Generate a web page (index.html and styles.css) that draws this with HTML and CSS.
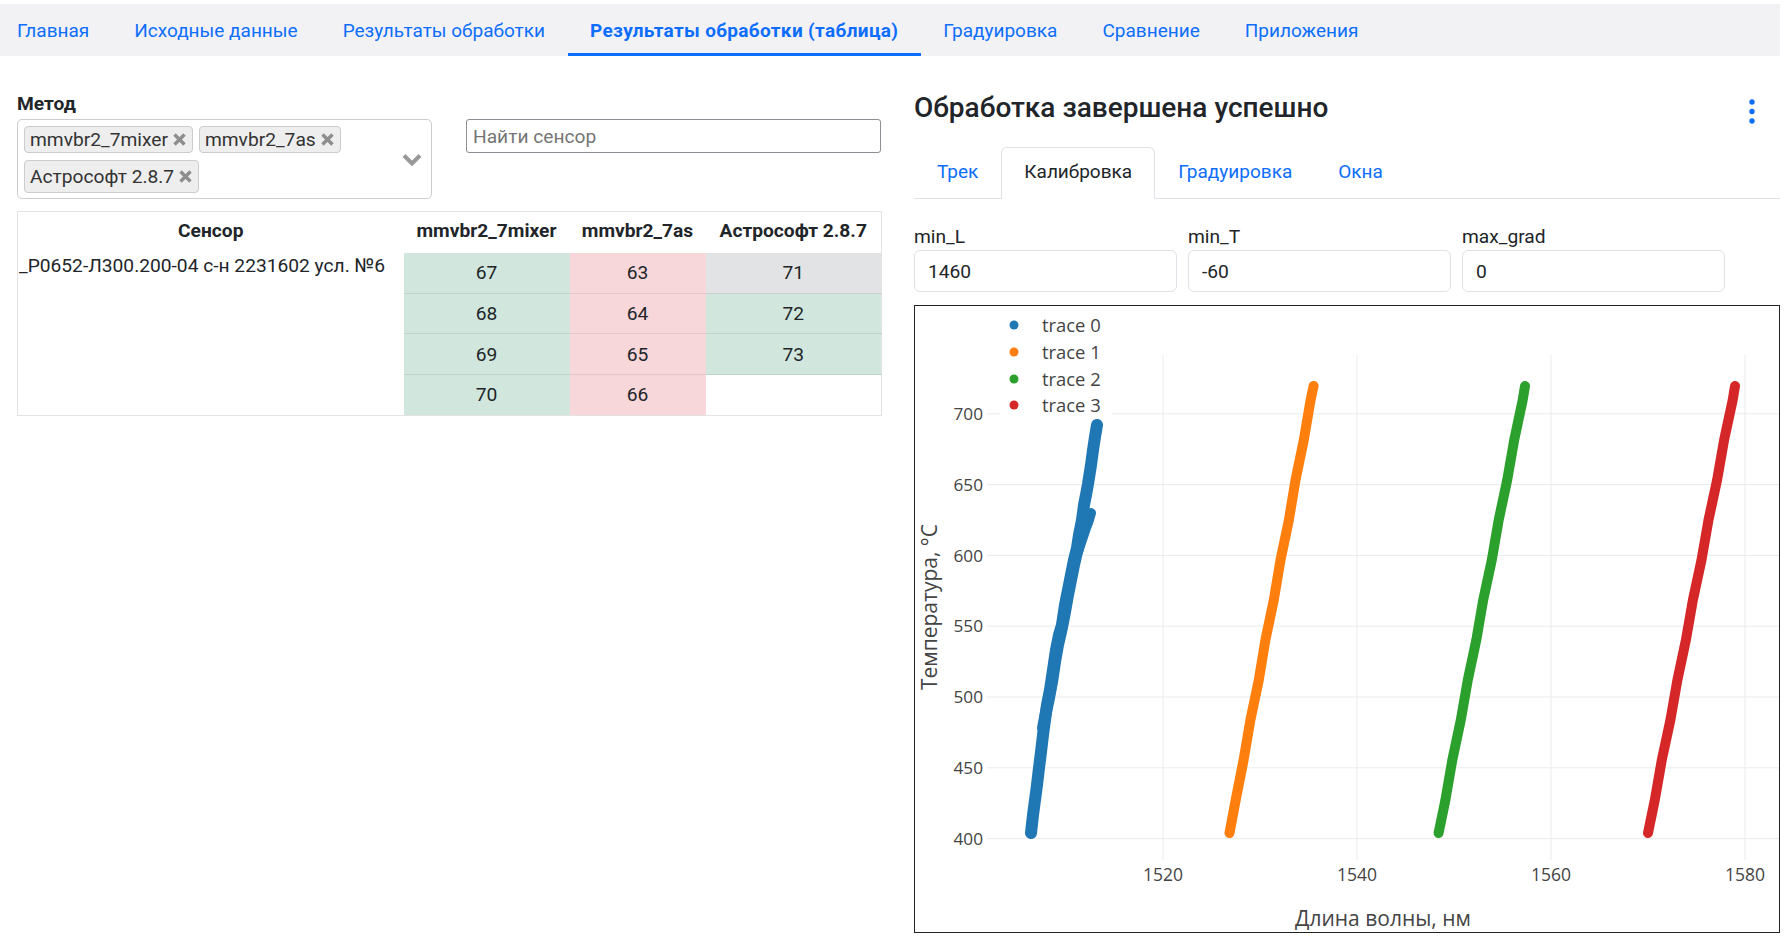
FILE: index.html
```html
<!DOCTYPE html>
<html lang="ru">
<head>
<meta charset="utf-8">
<title>Результаты обработки (таблица)</title>
<link rel="stylesheet" href="styles.css">
</head>
<body>
<nav class="topnav">
  <a class="nav-link">Главная</a>
  <a class="nav-link">Исходные данные</a>
  <a class="nav-link">Результаты обработки</a>
  <a class="nav-link active">Результаты обработки (таблица)</a>
  <a class="nav-link">Градуировка</a>
  <a class="nav-link">Сравнение</a>
  <a class="nav-link">Приложения</a>
</nav>

<main class="layout">
  <section class="left">
    <div class="filters">
      <div class="field">
        <label class="field-label">Метод</label>
        <div class="multiselect">
          <div class="chips">
            <span class="chip">mmvbr2_7mixer <svg class="chip-x" viewBox="0 0 15 15"><path d="M2.5 2.5L12.5 12.5M12.5 2.5L2.5 12.5"/></svg></span>
            <span class="chip">mmvbr2_7as <svg class="chip-x" viewBox="0 0 15 15"><path d="M2.5 2.5L12.5 12.5M12.5 2.5L2.5 12.5"/></svg></span>
            <span class="chip">Астрософт 2.8.7 <svg class="chip-x" viewBox="0 0 15 15"><path d="M2.5 2.5L12.5 12.5M12.5 2.5L2.5 12.5"/></svg></span>
            <span class="ms-input"></span>
          </div>
          <svg class="chevron" viewBox="0 0 20 13"><path d="M2 2.5L10 10.5L18 2.5"/></svg>
        </div>
      </div>
      <div class="field search-field">
        <input class="search" type="text" placeholder="Найти сенсор">
      </div>
    </div>

    <table class="results">
      <colgroup>
        <col class="c-sensor"><col class="c-mixer"><col class="c-as"><col class="c-astro">
      </colgroup>
      <thead>
        <tr><th>Сенсор</th><th>mmvbr2_7mixer</th><th>mmvbr2_7as</th><th>Астрософт 2.8.7</th></tr>
      </thead>
      <tbody>
        <tr><td rowspan="4" class="sensor">_P0652-Л300.200-04 с-н 2231602 усл. №6</td><td class="ok">67</td><td class="bad">63</td><td class="neutral">71</td></tr>
        <tr><td class="ok">68</td><td class="bad">64</td><td class="ok">72</td></tr>
        <tr><td class="ok">69</td><td class="bad">65</td><td class="ok">73</td></tr>
        <tr><td class="ok last">70</td><td class="bad last">66</td><td class="empty"></td></tr>
      </tbody>
    </table>
  </section>

  <section class="right">
    <header class="panel-head">
      <h4 class="panel-title">Обработка завершена успешно</h4>
      <button class="kebab" aria-label="menu"><svg viewBox="0 0 10 30"><circle cx="5" cy="5" r="2.7"/><circle cx="5" cy="14.5" r="2.7"/><circle cx="5" cy="24" r="2.7"/></svg></button>
    </header>

    <ul class="subtabs">
      <li class="subtab">Трек</li>
      <li class="subtab active">Калибровка</li>
      <li class="subtab">Градуировка</li>
      <li class="subtab">Окна</li>
    </ul>

    <div class="params">
      <div class="param"><label class="param-label">min_L</label><input class="param-input" value="1460"></div>
      <div class="param"><label class="param-label">min_T</label><input class="param-input" value="-60"></div>
      <div class="param"><label class="param-label">max_grad</label><input class="param-input" value="0"></div>
    </div>

    <div class="chart">
      <svg class="plot" width="864" height="626" viewBox="915 306 864 626">
        <g class="grid">
          <line x1="1163" y1="355" x2="1163" y2="860"/>
          <line x1="1357" y1="355" x2="1357" y2="860"/>
          <line x1="1551" y1="355" x2="1551" y2="860"/>
          <line x1="1745" y1="355" x2="1745" y2="860"/>
          <line x1="987" y1="838.6" x2="1779" y2="838.6"/>
          <line x1="987" y1="767.8" x2="1779" y2="767.8"/>
          <line x1="987" y1="697" x2="1779" y2="697"/>
          <line x1="987" y1="626.2" x2="1779" y2="626.2"/>
          <line x1="987" y1="555.4" x2="1779" y2="555.4"/>
          <line x1="987" y1="484.6" x2="1779" y2="484.6"/>
          <line x1="987" y1="413.8" x2="1779" y2="413.8"/>
        </g>
        <g class="yticks">
          <text x="983" y="844.8">400</text>
          <text x="983" y="774">450</text>
          <text x="983" y="703.2">500</text>
          <text x="983" y="632.4">550</text>
          <text x="983" y="561.6">600</text>
          <text x="983" y="490.8">650</text>
          <text x="983" y="420">700</text>
        </g>
        <g class="xticks">
          <text x="1163" y="881">1520</text>
          <text x="1357" y="881">1540</text>
          <text x="1551" y="881">1560</text>
          <text x="1745" y="881">1580</text>
        </g>
        <text class="axis-title" x="1383" y="926">Длина волны, нм</text>
        <text class="axis-title" x="930" y="607" dy="0.35em" transform="rotate(-90 930 607)">Температура, °C</text>

        <g class="traces">
          <polyline class="t0" points="1031,833 1033,815 1035,800 1037,785 1039,768 1041,752 1043,735 1045,720 1047,705 1050,690 1053,670 1056,650 1059,635 1062,625 1065,605 1068,590 1071,575 1074,560 1077,548 1079,535 1082,520 1084,505 1086,495 1088,484 1091,465 1093,450 1095,437 1097,425"/>
          <polyline class="t0" points="1043,728 1046,712 1049,698 1052,682 1055,662 1058,645 1061,632 1065,612 1068,595 1071,580 1074,565 1077,552 1080,540"/>
          <polyline class="t0 thin" points="1078,552 1082,540 1086,528 1089,520 1091,513"/>
          <polyline class="t1" points="1229.5,833 1235.7,800 1243.6,760 1250.4,720 1258.8,680 1265.4,640 1273.8,600 1280.5,560 1288.9,520 1295.5,480 1303.8,440 1310.6,400 1313.6,386"/>
          <polyline class="t2" points="1438.6,833 1445.4,800 1452.3,760 1460.8,720 1467.8,680 1476.3,640 1483.2,600 1491.8,560 1498.7,520 1507.2,480 1514.2,440 1522.7,400 1525,386"/>
          <polyline class="t3" points="1648,833 1654.8,800 1661.8,760 1670.4,720 1677.4,680 1685.9,640 1692.9,600 1701.5,560 1708.5,520 1717.1,480 1724.1,440 1732.7,400 1735,386"/>
        </g>

        <g class="legend">
          <rect x="1000" y="312" width="112" height="106"/>
          <circle cx="1014" cy="325" r="4.5" fill="#1f77b4"/>
          <circle cx="1014" cy="352" r="4.5" fill="#ff7f0e"/>
          <circle cx="1014" cy="379" r="4.5" fill="#2ca02c"/>
          <circle cx="1014" cy="405" r="4.5" fill="#d62728"/>
          <text x="1042" y="331.5">trace 0</text>
          <text x="1042" y="358.5">trace 1</text>
          <text x="1042" y="385.5">trace 2</text>
          <text x="1042" y="411.5">trace 3</text>
        </g>
      </svg>
    </div>
  </section>
</main>
</body>
</html>
```

FILE: styles.css
```css
* { box-sizing: border-box; }

body {
  margin: 0;
  font-family: Roboto, "Noto Sans", "Liberation Sans", sans-serif;
  font-size: 19.2px;
  color: #212529;
  background: #fff;
}

/* ---------- top navigation ---------- */
.topnav {
  margin: 4px 9px 0 0;
  height: 52px;
  background: #f2f2f5;
  display: flex;
}
.nav-link {
  display: flex;
  align-items: center;
  padding: 3px 22.5px 0;
  border-bottom: 3px solid transparent;
  color: #0d6efd;
  text-decoration: none;
  white-space: nowrap;
  cursor: pointer;
  font-size: 19px;
}
.nav-link:first-child { padding-left: 17px; }
.nav-link.active {
  font-weight: 700;
  letter-spacing: 0.35px;
  border-bottom-color: #0d6efd;
}

/* ---------- page layout ---------- */
.layout {
  display: grid;
  grid-template-columns: 864px 866px;
  column-gap: 33px;
  padding: 35px 9px 0 17px;
}

/* ---------- left column ---------- */
.filters {
  display: grid;
  grid-template-columns: 415px 415px;
  column-gap: 34px;
}
.field-label {
  display: block;
  margin: 2px 0 4px;
  line-height: 22px;
  font-weight: 700;
}
.search-field { padding-top: 28px; }

.multiselect {
  height: 80px;
  border: 1px solid #ccc;
  border-radius: 5px;
  display: flex;
  align-items: center;
  padding: 6px 9px 6px 6px;
}
.chips {
  flex: 1;
  align-self: stretch;
  display: flex;
  flex-wrap: wrap;
  align-content: flex-start;
  align-items: stretch;
  gap: 7px 6px;
}
.chip {
  display: inline-flex;
  align-items: center;
  gap: 4px;
  padding: 0 5px 0 5px;
  line-height: 25px;
  background: #eee;
  border: 1px solid #ccc;
  border-radius: 4px;
  color: #333;
  white-space: nowrap;
}
.chip-x {
  flex-shrink: 0;
  width: 15px;
  height: 15px;
  stroke: #8e8e8e;
  stroke-width: 3.4;
  fill: none;
}
.ms-input {
  width: 2px;
  height: 33px;
}
.chevron {
  width: 20px;
  height: 13px;
  fill: none;
  stroke: #999;
  stroke-width: 4;
  margin-top: 1px;
}

.search {
  display: block;
  width: 100%;
  height: 34px;
  border: 1px solid #8d8d93;
  border-radius: 3px;
  padding: 0 6px;
  font: inherit;
  color: #212529;
  outline: none;
}
.search::placeholder { color: #757575; }

/* ---------- results table ---------- */
.results {
  margin-top: 12px;
  width: 864px;
  border-collapse: collapse;
  table-layout: fixed;
  border: 1px solid #e3e3e3;
}
.c-sensor { width: 386px; }
.c-mixer { width: 166px; }
.c-as { width: 136px; }
.c-astro { width: 176px; }

.results th {
  height: 41px;
  padding: 0 4px 3px;
  font-weight: 700;
  text-align: center;
  vertical-align: middle;
  white-space: nowrap;
}
.results td {
  height: 40.7px;
  padding: 0;
  text-align: center;
  vertical-align: middle;
}
.results td.sensor {
  text-align: left;
  vertical-align: top;
  padding: 1px 0 0 1px;
  white-space: nowrap;
}
.results td.ok { background: #d1e7dd; border-bottom: 1px solid #bfd3ca; }
.results td.bad { background: #f8d7da; border-bottom: 1px solid #e2c5c8; }
.results td.neutral { background: #e2e3e5; border-bottom: 1px solid #ccced0; }
.results td.last { border-bottom-color: #e3e3e3; }
.results td.empty { background: #fff; }

/* ---------- right column ---------- */
.panel-head {
  height: 33px;
  display: flex;
  justify-content: space-between;
  align-items: flex-start;
}
.panel-title {
  margin: 1px 0 0;
  font-size: 28px;
  font-weight: 500;
  line-height: 32px;
  color: #212529;
}
.kebab {
  margin: 6px 8px 0 0;
  width: 40px;
  height: 30px;
  padding: 0;
  border: 0;
  background: none;
  display: flex;
  justify-content: center;
}
.kebab svg {
  width: 10px;
  height: 30px;
  fill: #0d6efd;
}

.subtabs {
  list-style: none;
  margin: 23px 0 0;
  padding: 0;
  display: flex;
  border-bottom: 1px solid #dee2e6;
}
.subtab {
  padding: 10px 22px 10px;
  line-height: 28.8px;
  height: 52px;
  margin-bottom: -1px;
  border: 1px solid transparent;
  border-radius: 6px 6px 0 0;
  color: #0d6efd;
  cursor: pointer;
  font-size: 19px;
}
.subtab.active {
  color: #212529;
  border-color: #dee2e6 #dee2e6 #fff;
  background: #fff;
}

.params {
  margin-top: 27px;
  display: grid;
  grid-template-columns: repeat(3, 263px);
  column-gap: 11px;
}
.param-label {
  display: block;
  line-height: 22px;
  margin-bottom: 2px;
}
.param-input {
  display: block;
  width: 100%;
  height: 42px;
  border: 1px solid #dee2e6;
  border-radius: 6px;
  padding: 0 13px;
  font: inherit;
  color: #212529;
  outline: none;
}

.chart {
  margin-top: 13px;
  width: 866px;
  height: 628px;
  border: 1px solid #222;
}
.plot { display: block; }
.plot .grid line { stroke: #ebebeb; stroke-width: 1; }
.plot text {
  font-family: "Open Sans", "DejaVu Sans", sans-serif;
  fill: #444;
}
.plot .yticks text { font-size: 17.2px; text-anchor: end; }
.plot .xticks text { font-size: 17.5px; text-anchor: middle; }
.plot .axis-title { font-size: 21px; text-anchor: middle; }
.plot .legend rect { fill: #fff; }
.plot .legend text { font-size: 18.4px; }
.plot .traces polyline {
  fill: none;
  stroke-width: 10;
  stroke-linecap: round;
  stroke-linejoin: round;
}
.plot .traces .t0 { stroke: #1f77b4; stroke-width: 12; }
.plot .traces .t0.thin { stroke-width: 10; }
.plot .traces .t1 { stroke: #ff7f0e; }
.plot .traces .t2 { stroke: #2ca02c; }
.plot .traces .t3 { stroke: #d62728; }
```
